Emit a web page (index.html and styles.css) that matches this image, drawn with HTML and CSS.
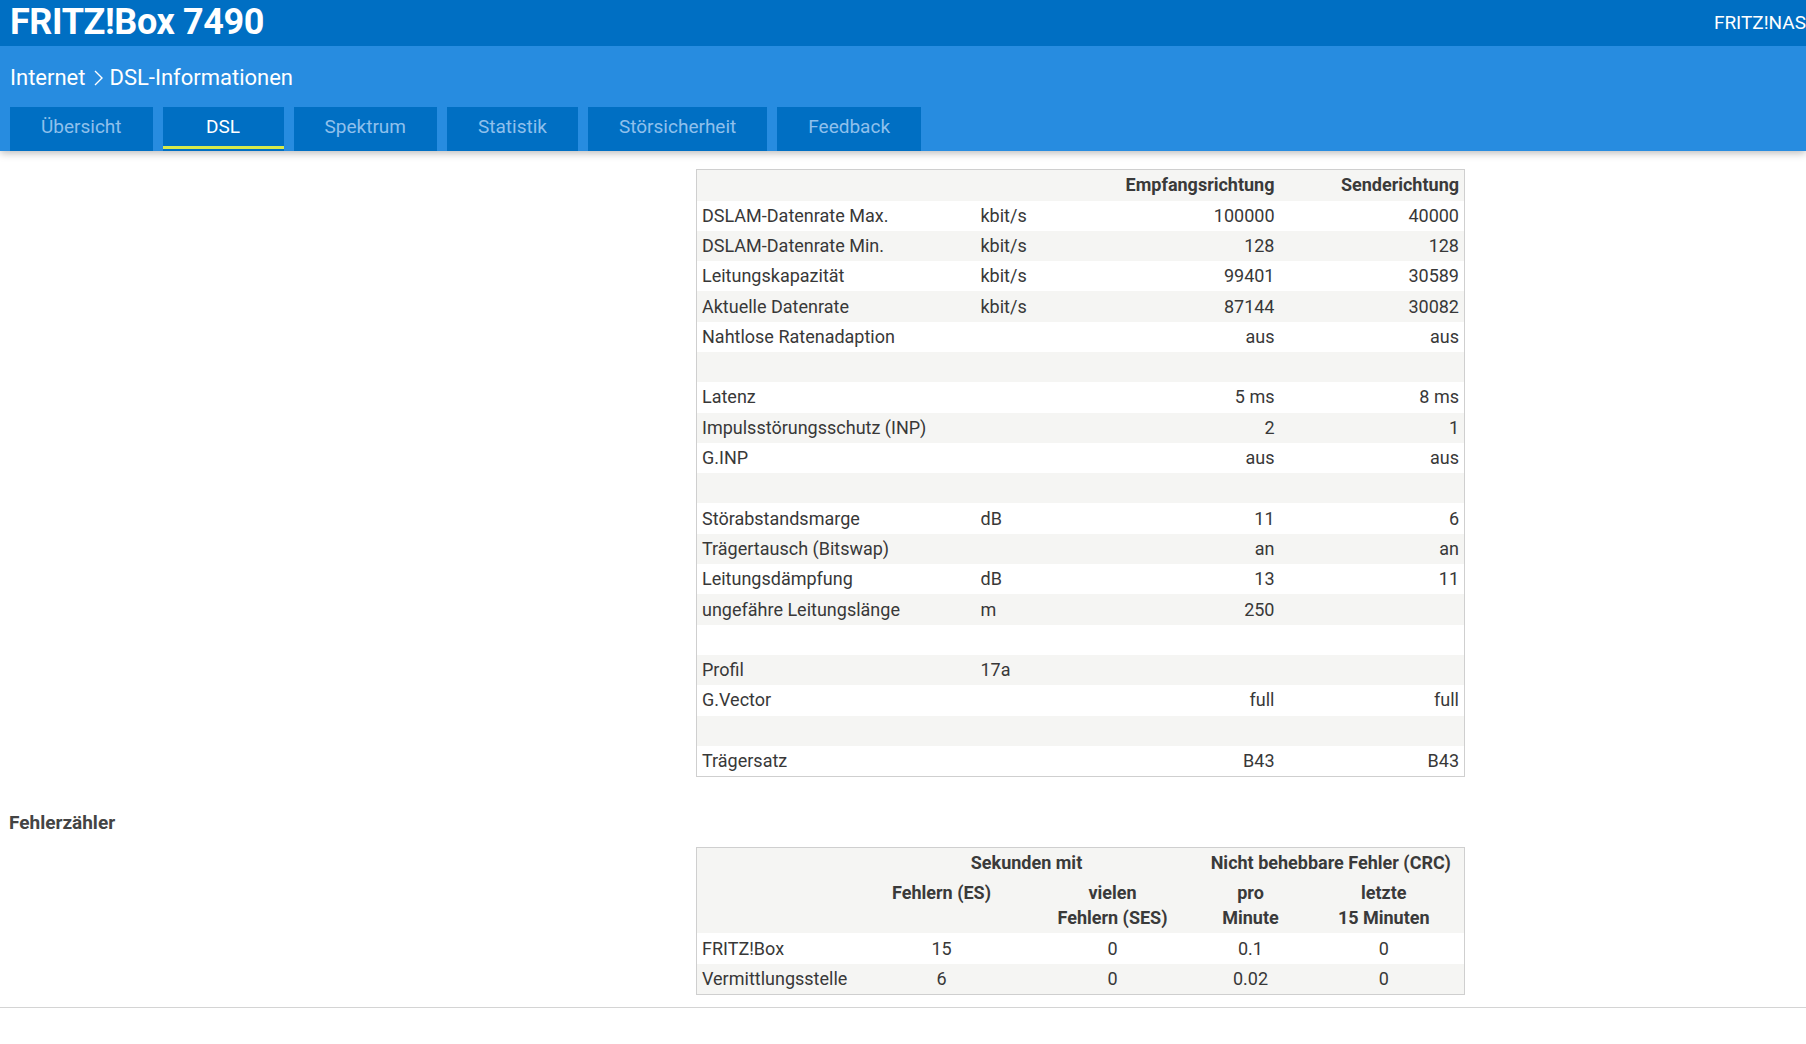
FILE: index.html
```html
<!DOCTYPE html>
<html lang="de">
<head>
<meta charset="utf-8">
<title>FRITZ!Box 7490 - DSL-Informationen</title>
<link rel="stylesheet" href="styles.css">
</head>
<body>
<header class="site-header">
  <div class="topbar">
    <div class="brand">FRITZ!Box 7490</div>
    <div class="nas-link">FRITZ!NAS</div>
  </div>
  <div class="subbar">
    <div class="crumbs">
      <span>Internet</span>
      <svg class="chev" width="14" height="18" viewBox="0 0 14 18"><polyline points="4,2 11,9 4,16" fill="none" stroke="#ffffff" stroke-width="1.4"/></svg>
      <span>DSL-Informationen</span>
    </div>
    <nav class="tabs">
      <a class="tab">Übersicht</a>
      <a class="tab tab-active">DSL</a>
      <a class="tab">Spektrum</a>
      <a class="tab">Statistik</a>
      <a class="tab">Störsicherheit</a>
      <a class="tab">Feedback</a>
    </nav>
  </div>
</header>

<main class="content">
  <table class="data data-main">
    <colgroup><col class="c1"><col class="c2"><col class="c3"><col class="c4"></colgroup>
    <thead>
      <tr><th></th><th></th><th class="r">Empfangsrichtung</th><th class="r">Senderichtung</th></tr>
    </thead>
    <tbody>
      <tr><td>DSLAM-Datenrate Max.</td><td>kbit/s</td><td class="r">100000</td><td class="r">40000</td></tr>
      <tr><td>DSLAM-Datenrate Min.</td><td>kbit/s</td><td class="r">128</td><td class="r">128</td></tr>
      <tr><td>Leitungskapazität</td><td>kbit/s</td><td class="r">99401</td><td class="r">30589</td></tr>
      <tr><td>Aktuelle Datenrate</td><td>kbit/s</td><td class="r">87144</td><td class="r">30082</td></tr>
      <tr><td>Nahtlose Ratenadaption</td><td></td><td class="r">aus</td><td class="r">aus</td></tr>
      <tr><td></td><td></td><td></td><td></td></tr>
      <tr><td>Latenz</td><td></td><td class="r">5 ms</td><td class="r">8 ms</td></tr>
      <tr><td>Impulsstörungsschutz (INP)</td><td></td><td class="r">2</td><td class="r">1</td></tr>
      <tr><td>G.INP</td><td></td><td class="r">aus</td><td class="r">aus</td></tr>
      <tr><td></td><td></td><td></td><td></td></tr>
      <tr><td>Störabstandsmarge</td><td>dB</td><td class="r">11</td><td class="r">6</td></tr>
      <tr><td>Trägertausch (Bitswap)</td><td></td><td class="r">an</td><td class="r">an</td></tr>
      <tr><td>Leitungsdämpfung</td><td>dB</td><td class="r">13</td><td class="r">11</td></tr>
      <tr><td>ungefähre Leitungslänge</td><td>m</td><td class="r">250</td><td class="r"></td></tr>
      <tr><td></td><td></td><td></td><td></td></tr>
      <tr><td>Profil</td><td>17a</td><td></td><td></td></tr>
      <tr><td>G.Vector</td><td></td><td class="r">full</td><td class="r">full</td></tr>
      <tr><td></td><td></td><td></td><td></td></tr>
      <tr><td>Trägersatz</td><td></td><td class="r">B43</td><td class="r">B43</td></tr>
    </tbody>
  </table>

  <h2 class="section-title">Fehlerzähler</h2>

  <table class="data data-errors">
    <colgroup><col class="e1"><col class="e2"><col class="e3"><col class="e4"><col class="e5"></colgroup>
    <thead>
      <tr class="h1"><th></th><th colspan="2">Sekunden mit</th><th colspan="2">Nicht behebbare Fehler (CRC)</th></tr>
      <tr class="h2"><th></th><th>Fehlern (ES)</th><th>vielen<br>Fehlern (SES)</th><th>pro<br>Minute</th><th>letzte<br>15 Minuten</th></tr>
    </thead>
    <tbody>
      <tr><td class="l">FRITZ!Box</td><td>15</td><td>0</td><td>0.1</td><td>0</td></tr>
      <tr><td class="l">Vermittlungsstelle</td><td>6</td><td>0</td><td>0.02</td><td>0</td></tr>
    </tbody>
  </table>
</main>
<div class="page-end"></div>
</body>
</html>
```

FILE: styles.css
```css
html, body {
  margin: 0;
  padding: 0;
  background: #ffffff;
}
body {
  font-family: Roboto, "Liberation Sans", sans-serif;
  color: #383838;
  overflow: hidden;
}

.site-header {
  box-shadow: 0 2px 8px rgba(0, 0, 0, 0.28);
  position: relative;
  z-index: 2;
}

.topbar {
  height: 46px;
  background: #006fc3;
  display: flex;
  align-items: flex-start;
  padding-left: 10px;
  color: #ffffff;
  overflow: hidden;
}
.brand {
  font-size: 36px;
  font-weight: 700;
  line-height: 45px;
  letter-spacing: -0.4px;
}
.nas-link {
  margin-left: auto;
  white-space: nowrap;
  font-size: 19px;
  line-height: 46px;
}

.subbar {
  background: #278ce0;
  padding-left: 10px;
  height: 105px;
  box-sizing: border-box;
}
.crumbs {
  height: 61px;
  box-sizing: border-box;
  padding-top: 19px;
  line-height: 26px;
  font-size: 22px;
  color: #ffffff;
  display: flex;
  align-items: flex-start;
}
.chev {
  margin: 4px 4px 0 6px;
}

.tabs {
  display: flex;
  gap: 10px;
}
.tab {
  height: 44px;
  box-sizing: border-box;
  padding: 0 31px 6px;
  min-width: 121px;
  display: flex;
  align-items: center;
  justify-content: center;
  background: #006fc3;
  color: #8fc0ec;
  font-size: 19px;
  white-space: nowrap;
}
.tab-active {
  color: #ffffff;
  background: #006fc3 linear-gradient(#d6ea4c, #d6ea4c) no-repeat left 0 bottom 2px / 100% 3px;
}

.content {
  padding: 18px 0 0 0;
}

.data {
  border-collapse: collapse;
  table-layout: fixed;
  width: 768px;
  margin-left: 696px;
  border: 1px solid #cfcfcf;
  font-size: 18px;
}
.data th, .data td {
  padding: 0 5px;
  line-height: 22px;
  white-space: nowrap;
}
.data th {
  font-weight: 700;
  color: #3a3a3a;
}
.data .r { text-align: right; }

.data-main col.c1 { width: 279px; }
.data-main col.c2 { width: 141px; }
.data-main col.c3 { width: 163px; }
.data-main col.c4 { width: 185px; }

.data-main thead tr { height: 31px; background: #f5f5f3; }
.data-main tbody tr { height: 30.3px; }
.data-main tbody tr:nth-child(even) { background: #f5f5f3; }
.data-main td { text-align: left; }

.section-title {
  margin: 33px 0 11px 9px;
  font-size: 19px;
  line-height: 26px;
  font-weight: 700;
  color: #444444;
}

.data-errors col.e1 { width: 159px; }
.data-errors col.e2 { width: 172px; }
.data-errors col.e3 { width: 170px; }
.data-errors col.e4 { width: 106px; }
.data-errors col.e5 { width: 161px; }

.data-errors thead tr { background: #f5f5f3; }
.data-errors thead tr.h1 { height: 31px; }
.data-errors thead tr.h1 th { vertical-align: middle; padding-top: 1px; }
.data-errors thead tr.h2 th {
  vertical-align: top;
  line-height: 25px;
  padding-top: 2px;
  padding-bottom: 3px;
}
.data-errors th, .data-errors td { text-align: center; }
.data-errors td.l { text-align: left; }
.data-errors tbody tr { height: 31px; }
.data-errors tbody tr:nth-child(even) { background: #f5f5f3; height: 30px; }

.page-end {
  margin-top: 12px;
  border-top: 1px solid #d4d4d4;
  height: 60px;
}
```
